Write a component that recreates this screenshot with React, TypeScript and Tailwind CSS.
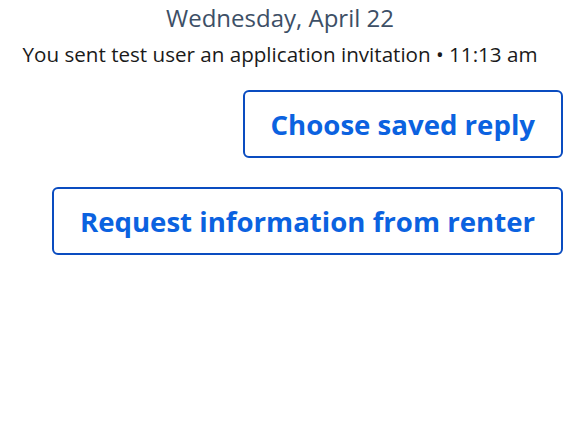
export default function App() {
  return (
    <div className="w-[576px] h-[432px] bg-white flex flex-col" style={{ fontFamily: '"Open Sans", sans-serif' }}>
      <div className="pr-[16px] text-center text-[24px] leading-[32px] text-[#3d4f66] mt-[2px]">Wednesday, April 22</div>
      <div className="pr-[16px] text-center text-[20.6px] leading-[28px] text-[#1a1a1a] mt-[6px]">You sent test user an application invitation • 11:13 am</div>
      <div className="flex flex-col items-end pr-[13px] mt-[22px] gap-[29px]">
        <button className="h-[68px] px-[26px] pt-[2px] border-2 border-[#0a4cc0] rounded-[6px] text-[27.6px] font-bold text-[#0b62e0]">Choose saved reply</button>
        <button className="h-[68px] px-[26px] pt-[2px] border-2 border-[#0a4cc0] rounded-[6px] text-[27.6px] font-bold text-[#0b62e0]">Request information from renter</button>
      </div>
    </div>
  );
}
